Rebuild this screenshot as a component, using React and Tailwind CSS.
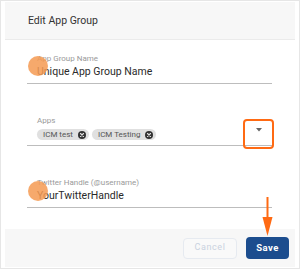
import React from "react";

function Chip({ label }) {
  return (
    <div className="flex items-center h-[11px] rounded-full bg-[#e0e0e0] pl-[6px] pr-[3px] gap-[5px]">
      <span className="text-[8px] leading-[11px] text-[#555]">{label}</span>
      <svg width="8" height="8" viewBox="0 0 8 8">
        <circle cx="4" cy="4" r="4" fill="#333" />
        <path d="M2.5 2.5 L5.5 5.5 M5.5 2.5 L2.5 5.5" stroke="#e0e0e0" strokeWidth="1.1" strokeLinecap="round" />
      </svg>
    </div>
  );
}

export default function App() {
  return (
    <div
      className="relative w-[300px] h-[269px] border border-[#e6e6e6] bg-white pt-[1px] px-[4px] flex flex-col overflow-hidden"
      style={{ fontFamily: "Roboto, 'Liberation Sans', sans-serif" }}
    >
      <div className="h-[38px] shrink-0 bg-[#f7f7f7] border-b border-[#ebebeb] flex items-center pl-[23px]">
        <span className="text-[10.5px] text-[#333]">Edit App Group</span>
      </div>

      <div className="ml-[22px] w-[245px] mt-[14px] px-[10px] pb-[3px] border-b border-[#bdbdbd]">
        <div className="text-[8px] leading-[10px] text-[#9a9a9a]">App Group Name</div>
        <div className="text-[10.5px] leading-[16px] text-[#2a2a2a]">Unique App Group Name</div>
      </div>

      <div className="ml-[22px] w-[245px] mt-[32px] px-[10px] pb-[5px] border-b border-[#bdbdbd] flex items-end justify-between">
        <div>
          <div className="text-[8px] leading-[10px] text-[#9a9a9a]">Apps</div>
          <div className="flex gap-[3px] mt-[3px]">
            <Chip label="ICM test" />
            <Chip label="ICM Testing" />
          </div>
        </div>
      </div>

      <div className="ml-[22px] w-[245px] mt-[32px] px-[10px] pb-[3px] border-b border-[#bdbdbd]">
        <div className="text-[8px] leading-[10px] text-[#9a9a9a]">Twitter Handle (@username)</div>
        <div className="text-[10.5px] leading-[16px] text-[#2a2a2a]">YourTwitterHandle</div>
      </div>

      <div className="mt-auto mb-[1px] h-[38px] shrink-0 bg-[#f7f7f7] flex items-center justify-end pr-[6px] gap-[9px]">
        <button className="h-[21px] w-[54px] rounded-[4px] border border-[#e6eaf0] text-[9px] tracking-[0.6px] text-[#c9d2e0] bg-[#f9f9f9]">
          Cancel
        </button>
        <button className="h-[22px] w-[43px] rounded-[4px] bg-[#1c4d8e] text-[9.5px] font-bold tracking-[0.4px] text-white">
          Save
        </button>
      </div>

      {/* dropdown arrow */}
      <svg className="absolute left-[255px] top-[127px]" width="6" height="4" viewBox="0 0 6 4">
        <path d="M0 0 L6 0 L3 3.5 Z" fill="#666" />
      </svg>

      {/* annotations */}
      <div className="absolute left-[27px] top-[55px] w-[20px] h-[20px] rounded-full bg-[#f59a52] opacity-85" />
      <div className="absolute left-[27px] top-[180px] w-[20px] h-[20px] rounded-full bg-[#f59a52] opacity-85" />
      <div className="absolute left-[242px] top-[118px] w-[31px] h-[30px] rounded-[4px] border-2 border-[#ff6a13]" />
      <svg className="absolute left-[261px] top-[196px]" width="12" height="40" viewBox="0 0 12 40">
        <line x1="5.5" y1="0" x2="5.5" y2="24" stroke="#ff6a13" strokeWidth="2" />
        <path d="M0.5 20 L10.5 20 L5.5 39 Z" fill="#ff6a13" />
      </svg>
    </div>
  );
}
